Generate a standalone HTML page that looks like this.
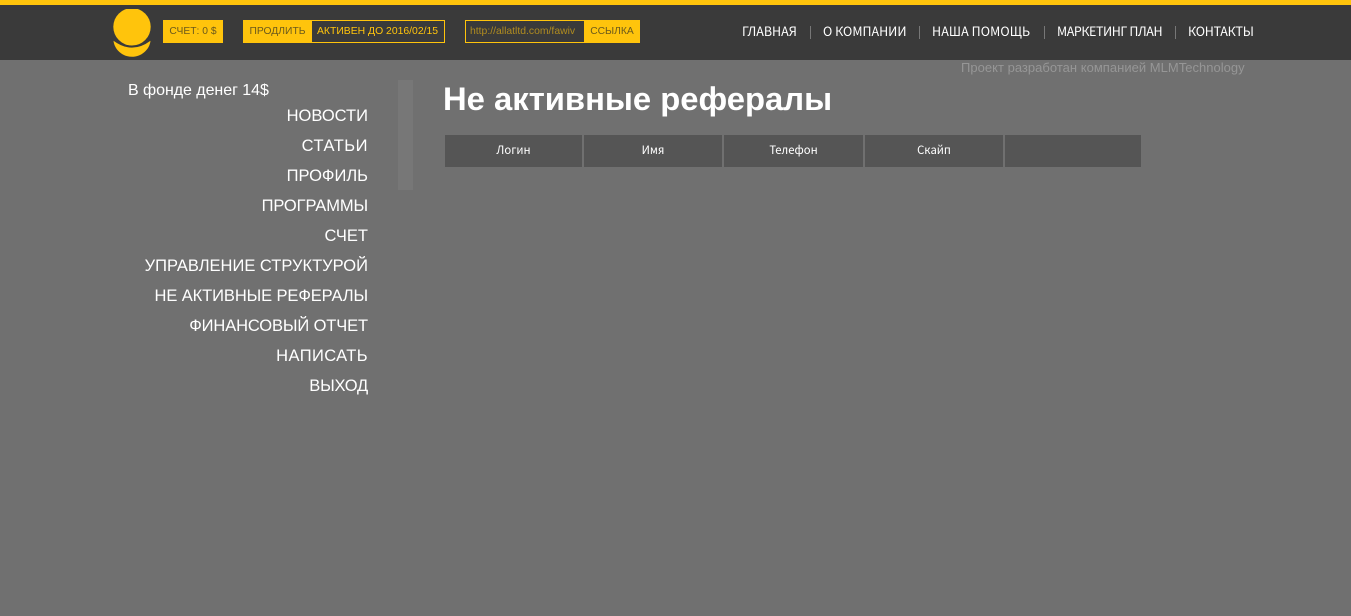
<!DOCTYPE html>
<html lang="ru">
<head>
<meta charset="utf-8">
<title>Не активные рефералы</title>
<style>
html,body{margin:0;padding:0;width:1351px;height:616px;overflow:hidden;background:#707070;font-family:"Liberation Sans",sans-serif;}
.a{position:absolute;white-space:nowrap;}
#hdr{left:0;top:0;width:1351px;height:60px;background:#3a3a3a;border-top:5px solid #ffc40c;box-sizing:border-box;}
.y{background:#ffc40c;color:#6b5a1c;font-size:10.3px;height:23px;line-height:23px;text-align:center;top:20px;}
.o{border:1px solid #ffc40c;box-sizing:border-box;color:#ffc40c;font-size:10.4px;height:23px;line-height:21px;top:20px;}
.n{top:22px;height:18px;line-height:18px;font-size:12.5px;color:#fff;font-family:"Noto Sans CJK JP","Liberation Sans",sans-serif;}
.s{top:26px;width:1px;height:13px;background:#777;}
.m{right:983px;font-size:16.5px;line-height:20px;color:#fff;text-align:right;}
.th{top:135px;height:32px;line-height:31px;background:#555;color:#fff;font-size:11.3px;text-align:center;font-family:"Noto Sans CJK JP","Liberation Sans",sans-serif;}
</style>
</head>
<body>
<div class="a" id="hdr"></div>
<svg class="a" style="left:113px;top:9px" width="38" height="48" viewBox="0 0 38 48">
<circle cx="19" cy="17.800" r="18.700" fill="#ffc40c"/>
<path d="M0.500 31.700Q19 45.500 37.500 31.700C36.500 41 28 47.800 19 47.800C10 47.800 1.500 41 0.500 31.700Z" fill="#ffc40c"/>
</svg>
<div class="a y" style="left:163px;width:60px">СЧЕТ: 0 $</div>
<div class="a y" style="left:243px;width:69px">ПРОДЛИТЬ</div>
<div class="a o" style="left:311px;width:134px;padding-left:5px">АКТИВЕН ДО 2016/02/15</div>
<div class="a o" style="left:465px;width:120px;padding-left:4px;color:#b08c20">http://allatltd.com/fawiv</div>
<div class="a y" style="left:584px;width:56px">ССЫЛКА</div>

<div class="a n" style="left:742px">ГЛАВНАЯ</div>
<div class="a s" style="left:810px"></div>
<div class="a n" style="left:823px">О КОМПАНИИ</div>
<div class="a s" style="left:919px"></div>
<div class="a n" style="left:932px;letter-spacing:.1px">НАША ПОМОЩЬ</div>
<div class="a s" style="left:1044px"></div>
<div class="a n" style="left:1057px;letter-spacing:-.43px">МАРКЕТИНГ ПЛАН</div>
<div class="a s" style="left:1175px"></div>
<div class="a n" style="left:1188px;letter-spacing:-.25px">КОНТАКТЫ</div>

<div class="a" style="left:961px;top:60px;font-size:13px;letter-spacing:.02px;line-height:16px;color:#969696">Проект разработан компанией MLMTechnology</div>

<div class="a" style="left:128px;top:81px;font-size:16px;letter-spacing:-.05px;line-height:20px;color:#fff">В фонде денег 14$</div>
<div class="a m" style="top:106px">НОВОСТИ</div>
<div class="a m" style="top:136px;letter-spacing:.5px">СТАТЬИ</div>
<div class="a m" style="top:166px">ПРОФИЛЬ</div>
<div class="a m" style="top:196px;letter-spacing:-.1px">ПРОГРАММЫ</div>
<div class="a m" style="top:226px">СЧЕТ</div>
<div class="a m" style="top:256px">УПРАВЛЕНИЕ СТРУКТУРОЙ</div>
<div class="a m" style="top:286px;letter-spacing:-.1px">НЕ АКТИВНЫЕ РЕФЕРАЛЫ</div>
<div class="a m" style="top:316px;letter-spacing:-.12px">ФИНАНСОВЫЙ ОТЧЕТ</div>
<div class="a m" style="top:346px;letter-spacing:.4px">НАПИСАТЬ</div>
<div class="a m" style="top:376px;letter-spacing:-.2px">ВЫХОД</div>

<div class="a" style="left:398px;top:80px;width:15px;height:110px;background:#777"></div>

<div class="a" style="left:443px;top:79px;font-size:32.8px;line-height:40px;font-weight:bold;color:#fff">Не активные рефералы</div>

<div class="a th" style="left:445px;width:137px">Логин</div>
<div class="a th" style="left:584px;width:138px">Имя</div>
<div class="a th" style="left:724px;width:139px">Телефон</div>
<div class="a th" style="left:865px;width:138px">Скайп</div>
<div class="a th" style="left:1005px;width:136px"></div>
</body>
</html>
